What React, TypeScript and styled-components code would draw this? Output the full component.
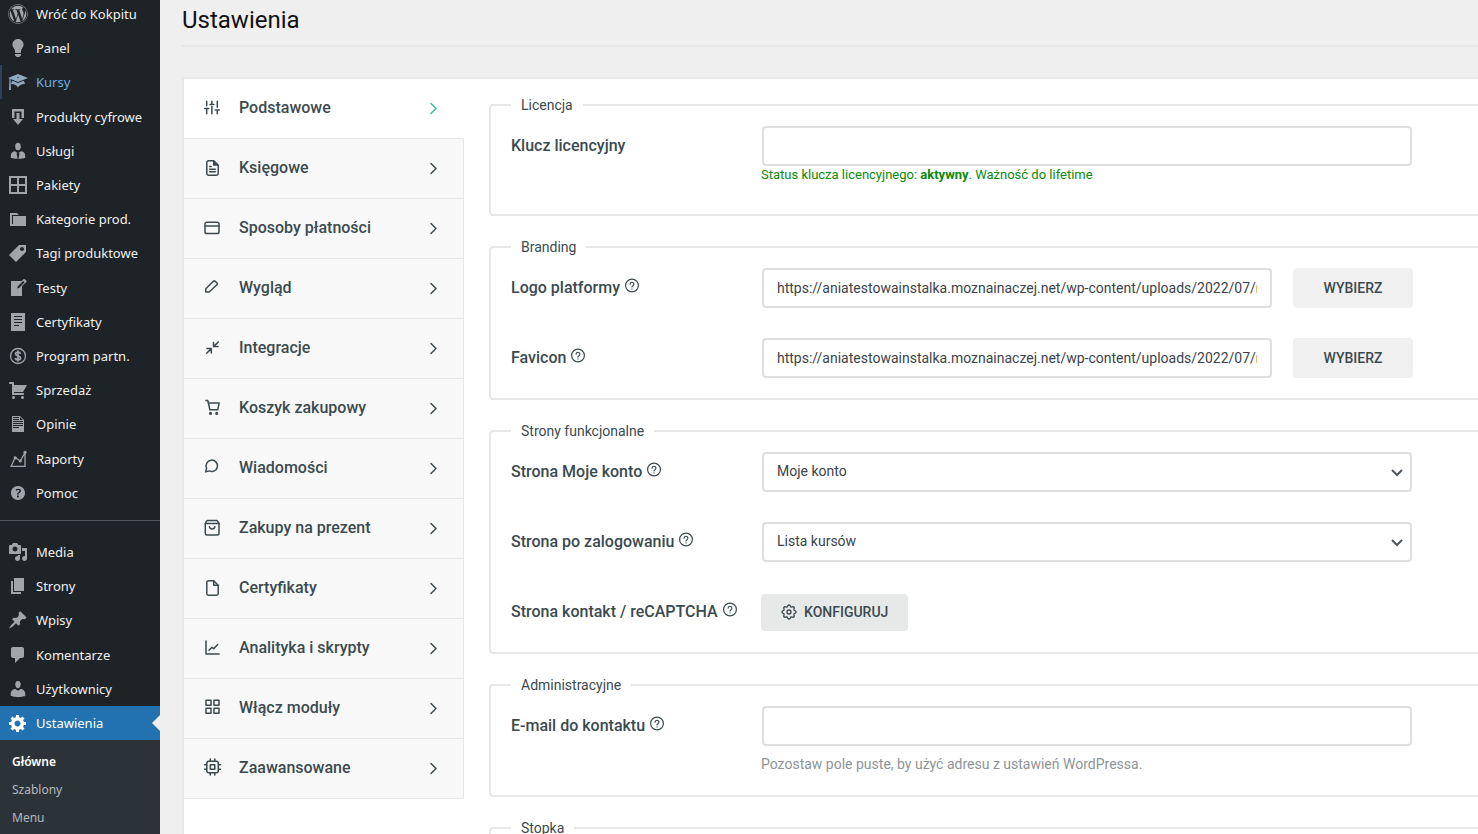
import React from 'react';
import styled, { createGlobalStyle, css } from 'styled-components';
import { FaWordpress } from 'react-icons/fa';

const color = {
  ink: '#3b4a4f',
  line: '#e6e8e8',
  page: '#efefef',
  side: '#1d2327',
  sub: '#2c3338',
  blue: '#2271b1',
};

const GlobalStyle = createGlobalStyle`
  *, *::before, *::after { box-sizing: border-box; }
  body {
    margin: 0;
    background: ${color.page};
    color: ${color.ink};
    font-family: Roboto, sans-serif;
    font-size: 14px;
    line-height: 20px;
  }
  a { color: inherit; text-decoration: none; }
  ul { list-style: none; margin: 0; padding: 0; }
`;

const Shell = styled.div`
  display: flex;
  height: 100vh;
  overflow: hidden;
`;

/* ---------- Admin sidebar ---------- */

const Sidebar = styled.nav`
  flex: 0 0 160px;
  margin-top: -3px;
  background: ${color.side};
  color: #f0f0f1;
  font-family: 'Noto Sans', sans-serif;
  font-size: 13px;
`;

const MenuGroup = styled.ul<{ $height: number }>`
  display: flex;
  flex-direction: column;
  justify-content: space-between;
  min-height: ${(p) => p.$height}px;
`;

const MenuLink = styled.a<{ $state?: 'hover' | 'current' }>`
  position: relative;
  display: flex;
  align-items: center;
  gap: 8px;
  height: 34px;
  padding: 0 8px;
  white-space: nowrap;

  svg {
    flex: none;
    width: 20px;
    height: 20px;
    fill: #a0a5aa;
    color: #a0a5aa;
  }

  ${(p) =>
    p.$state === 'hover' &&
    css`
      color: #72aee6;
      box-shadow: inset 2px 0 0 #2f4458;
      svg { fill: #90a8c0; }
    `}

  ${(p) =>
    p.$state === 'current' &&
    css`
      background: ${color.blue};
      color: #fff;
      svg { fill: #fff; }
      &::after {
        content: '';
        position: absolute;
        right: 0;
        top: 9px;
        border: 8px solid transparent;
        border-left-width: 0;
        border-right-color: ${color.page};
      }
    `}
`;

const MenuDivider = styled.hr`
  margin: 10px 0 14px;
  border: 0;
  border-top: 1px solid #50575e;
`;

const SubMenu = styled.ul`
  padding: 8px 0 20px;
  background: ${color.sub};
`;

const SubLink = styled.a<{ $current?: boolean }>`
  display: block;
  padding: 4px 12px;
  font-size: 12px;
  color: ${(p) => (p.$current ? '#fff' : '#b4b9be')};
  font-weight: ${(p) => (p.$current ? 600 : 400)};
`;

const Glyph = ({ d, children }: { d?: string; children?: React.ReactNode }) => (
  <svg viewBox="0 0 20 20" aria-hidden="true">
    {d && <path fillRule="evenodd" d={d} />}
    {children}
  </svg>
);

type MenuEntry = { label: string; icon: React.ReactNode; state?: 'hover' | 'current' };

const productMenu: MenuEntry[] = [
  { label: 'Wróć do Kokpitu', icon: <FaWordpress /> },
  {
    label: 'Panel',
    icon: (
      <Glyph d="M10 1c3.11 0 5.63 2.52 5.63 5.62 0 1.84-2.03 4.58-2.03 4.58-.33.44-.6 1.25-.6 1.8v1c0 .55-.45 1-1 1H8c-.55 0-1-.45-1-1v-1c0-.55-.27-1.36-.6-1.8 0 0-2.02-2.74-2.02-4.58C4.38 3.52 6.89 1 10 1zM7 16.87V16h6v.87c0 .62-.13 1.13-.75 1.13H12c0 .62-.4 1-1.02 1h-2c-.61 0-.98-.38-.98-1h-.25c-.62 0-.75-.51-.75-1.13z" />
    ),
  },
  {
    label: 'Kursy',
    state: 'hover',
    icon: (
      <Glyph d="M10 10L2.54 7.02 3 18H1l.48-11.41L0 6l10-4 10 4zm0-5c-.55 0-1 .22-1 .5s.45.5 1 .5 1-.22 1-.5-.45-.5-1-.5zm0 6l5.57-2.23c.71.94 1.2 2.07 1.36 3.3-.3-.04-.61-.07-.93-.07-2.55 0-4.78 1.37-6 3.41C8.78 13.37 6.55 12 4 12c-.32 0-.63.03-.93.07.16-1.23.65-2.36 1.36-3.3z" />
    ),
  },
  { label: 'Produkty cyfrowe', icon: <Glyph d="M4 2h12v9h-2.500V4.500h-7V11H4zM8.500 6h3v6H15l-5 6-5-6h3.500z" /> },
  {
    label: 'Usługi',
    icon: (
      <Glyph d="M10 9.200c-2.200 0-2.800-2.200-2.800-3.800C7.200 3.200 8.200 1.800 10 1.800s2.800 1.400 2.800 3.600c0 1.600-.6 3.800-2.800 3.800zM7 10.300l2.200 1.500L8.600 13l1 4.800c-3.500 0-6.800-.8-6.800-.8v-2.500c0-2.200 1.900-4.200 4.200-4.200zm6 0c2.300 0 4.200 2 4.200 4.200V17s-3.300.8-6.800.8l1-4.800-.6-1.200z" />
    ),
  },
  { label: 'Pakiety', icon: <Glyph d="M1 1h18v18H1zM3 3v6h6V3zm8 0v6h6V3zM3 11v6h6v-6zm8 0v6h6v-6z" /> },
  { label: 'Kategorie prod.', icon: <Glyph d="M5 7h13v10H2V4h7l2 2H4v9h1z" /> },
  {
    label: 'Tagi produktowe',
    icon: <Glyph d="M11 2h7v7L8 19l-7-7zm3 6c1.100 0 2-.9 2-2s-.9-2-2-2-2 .9-2 2 .9 2 2 2z" />,
  },
  {
    label: 'Testy',
    icon: (
      <Glyph d="M16.890 1.200l1.410 1.410c.39.39.39 1.020 0 1.410L14 8.330V18H3V3h10.670l1.800-1.800c.4-.39 1.030-.4 1.420 0zm-5.660 8.480l5.370-5.360-1.420-1.420-5.360 5.370-.71 2.120z" />
    ),
  },
  {
    label: 'Certyfikaty',
    icon: <Glyph d="M3 1h14v18H3zM6 4v1h8V4zm0 3v1h8V7zm0 3v1h8v-1zm0 3v1h5v-1z" />,
  },
  {
    label: 'Program partn.',
    icon: (
      <Glyph>
        <g fill="none" stroke="#a0a5aa">
          <circle cx="10" cy="10" r="7.500" strokeWidth="1.300" />
          <path
            strokeWidth="1.700"
            d="M12.500 7.800C12.300 6.800 11.300 6.200 10 6.200c-1.500 0-2.400.7-2.400 1.800 0 2.600 5 1.300 5 3.900 0 1.200-1.100 1.900-2.600 1.900-1.400 0-2.500-.7-2.700-1.800M10 4.500v11"
          />
        </g>
      </Glyph>
    ),
  },
  {
    label: 'Sprzedaż',
    icon: (
      <Glyph d="M6 13h9c.55 0 1 .45 1 1s-.45 1-1 1H5c-.55 0-1-.45-1-1V4H2c-.55 0-1-.45-1-1s.45-1 1-1h3c.55 0 1 .45 1 1v2h13l-4 7H6v1zm-.5 3c.83 0 1.500.67 1.500 1.500S6.330 19 5.500 19 4 18.330 4 17.500 4.670 16 5.500 16zm9 0c.83 0 1.500.67 1.500 1.500s-.67 1.500-1.500 1.500-1.500-.67-1.500-1.500.67-1.500 1.500-1.500z" />
    ),
  },
  {
    label: 'Opinie',
    icon: (
      <Glyph d="M12 2l4 4v12H4V2h8zM5 3v1h6V3H5zm7 3h3l-3-3v3zM5 5v1h6V5H5zm10 3V7H5v1h10zm0 2V9H5v1h10zm0 2v-1H5v1h10zm-4 2v-1H5v1h6z" />
    ),
  },
  {
    label: 'Raporty',
    icon: (
      <Glyph>
        <path fill="none" stroke="#a0a5aa" strokeWidth="1.300" d="M17 3.500L12.300 12 7.200 8.500 3.200 17.300H17z" />
        <circle cx="17" cy="3.300" r="1.600" />
        <circle cx="12.300" cy="12" r="1.500" />
        <circle cx="7.200" cy="8.800" r="1.600" />
      </Glyph>
    ),
  },
  {
    label: 'Pomoc',
    icon: (
      <Glyph d="M17 10c0-3.870-3.140-7-7-7-3.870 0-7 3.130-7 7s3.130 7 7 7c3.860 0 7-3.130 7-7zm-6.300 1.480H9.140v-.43c0-.38.08-.7.24-.98s.46-.57.88-.89c.41-.29.68-.53.81-.71.14-.18.2-.39.2-.62 0-.25-.09-.44-.28-.58-.19-.13-.45-.19-.79-.19-.58 0-1.250.19-2 .57l-.64-1.280c.87-.49 1.800-.74 2.770-.74.81 0 1.450.2 1.920.58.48.39.71.91.71 1.550 0 .43-.09.8-.29 1.110-.19.32-.57.67-1.110 1.060-.38.28-.61.49-.71.63-.1.15-.15.34-.15.57v.35zm-1.470 2.740c-.18-.17-.27-.42-.27-.73 0-.33.08-.58.26-.75s.43-.25.77-.25c.32 0 .57.09.75.26s.27.42.27.74c0 .3-.09.55-.27.72-.18.18-.43.27-.75.27-.33 0-.58-.09-.76-.26z" />
    ),
  },
];

const siteMenu: MenuEntry[] = [
  {
    label: 'Media',
    icon: (
      <Glyph d="M13 11V4c0-.55-.45-1-1-1h-1.670L9 1H5L3.670 3H2c-.55 0-1 .45-1 1v7c0 .55.45 1 1 1h10c.55 0 1-.45 1-1zM7 4.500c1.380 0 2.500 1.120 2.500 2.500S8.380 9.500 7 9.500 4.500 8.380 4.500 7 5.620 4.500 7 4.500zM14 6h5v10.500c0 1.380-1.120 2.500-2.500 2.500S14 17.880 14 16.500s1.120-2.500 2.500-2.500c.17 0 .34.02.5.05V9h-3V6zm-4 8.050V13h2v3.500c0 1.380-1.120 2.500-2.500 2.500S7 17.880 7 16.500 8.120 14 9.500 14c.17 0 .34.02.5.05z" />
    ),
  },
  { label: 'Strony', icon: <Glyph d="M6 15V2h10v13H6zm-1 1h8v2H3V5h2v11z" /> },
  {
    label: 'Wpisy',
    icon: (
      <Glyph d="M10.440 3.020l1.820-1.820 6.360 6.350-1.830 1.820c-1.050-.68-2.480-.57-3.410.36l-.75.75c-.92.93-1.040 2.350-.35 3.410l-1.830 1.820-2.410-2.410-2.800 2.790c-.42.42-3.380 2.710-3.800 2.290s1.860-3.390 2.280-3.810l2.790-2.790L4.100 9.360l1.830-1.820c1.050.69 2.480.57 3.400-.36l.75-.75c.93-.92 1.050-2.350.36-3.410z" />
    ),
  },
  {
    label: 'Komentarze',
    icon: <Glyph d="M5 2h9c1.100 0 2 .9 2 2v7c0 1.100-.9 2-2 2h-2l-5 5v-5H5c-1.100 0-2-.9-2-2V4c0-1.100.9-2 2-2z" />,
  },
  {
    label: 'Użytkownicy',
    icon: (
      <Glyph d="M10 9.250c-2.270 0-2.730-3.440-2.730-3.440C7 4.020 7.820 2 9.970 2c2.160 0 2.980 2.020 2.710 3.810 0 0-.41 3.440-2.680 3.440zm0 2.570L12.720 10c2.390 0 4.520 2.330 4.520 4.530v2.490s-3.650 1.130-7.240 1.130c-3.650 0-7.240-1.130-7.240-1.130v-2.490c0-2.250 1.940-4.480 4.470-4.480z" />
    ),
  },
  {
    label: 'Ustawienia',
    state: 'current',
    icon: (
      <Glyph d="M18 12h-2.180c-.17.7-.44 1.350-.81 1.930l1.540 1.540-2.100 2.100-1.540-1.540c-.58.36-1.230.63-1.910.79V19H8v-2.180c-.68-.16-1.330-.43-1.910-.79l-1.540 1.540-2.120-2.120 1.540-1.540c-.36-.58-.63-1.230-.79-1.910H1V9.030h2.170c.16-.7.44-1.350.8-1.940L2.430 5.550l2.100-2.100 1.540 1.540c.58-.37 1.240-.64 1.930-.81V2h3v2.180c.68.16 1.330.43 1.910.79l1.540-1.540 2.120 2.120-1.540 1.540c.36.59.64 1.240.8 1.940H18V12zm-8.500 1.500c1.660 0 3-1.340 3-3s-1.340-3-3-3-3 1.340-3 3 1.340 3 3 3z" />
    ),
  },
];

const Menu = ({ items, height }: { items: MenuEntry[]; height: number }) => (
  <MenuGroup $height={height}>
    {items.map((m) => (
      <li key={m.label}>
        <MenuLink href="#" $state={m.state} aria-current={m.state === 'current' ? 'page' : undefined}>
          {m.icon}
          <span>{m.label}</span>
        </MenuLink>
      </li>
    ))}
  </MenuGroup>
);

/* ---------- Main area ---------- */

const Main = styled.main`
  flex: 1;
  min-width: 0;
  padding-left: 22px;
`;

const PageTitle = styled.h1`
  margin: 0 0 30px;
  padding: 5px 0 10px;
  border-bottom: 2px solid ${color.line};
  color: #111;
  font-size: 24px;
  font-weight: 400;
  line-height: 30px;
`;

const Panel = styled.div`
  display: grid;
  grid-template-columns: 280px minmax(0, 1fr);
  column-gap: 25px;
  border: solid ${color.line};
  border-width: 2px 0 0 2px;
  background: #fff;
`;

const TabLink = styled.a<{ $active?: boolean }>`
  display: flex;
  align-items: center;
  gap: 17px;
  height: 60px;
  padding: 0 22px 2px 18px;
  border: solid ${color.line};
  border-width: 0 1px 1px 0;
  ${(p) => p.$active && 'border-right-color: transparent;'}
  background: ${(p) => (p.$active ? '#fff' : '#f8f8f8')};
  font-size: 16px;
  font-weight: 500;

  span { flex: 1; }
`;

const LineIcon = styled.svg<{ $size?: number }>`
  flex: none;
  width: ${(p) => p.$size ?? 20}px;
  height: ${(p) => p.$size ?? 20}px;
  fill: none;
  stroke: currentColor;
  stroke-width: 1.5;
  stroke-linecap: round;
  stroke-linejoin: round;
`;

const Chevron = styled(LineIcon)<{ $active?: boolean }>`
  width: 16px;
  height: 16px;
  color: ${(p) => (p.$active ? '#35bd9e' : color.ink)};
`;

const tabs: { label: string; icon: React.ReactNode }[] = [
  {
    label: 'Podstawowe',
    icon: <path d="M4.700 3.200v4.500M4.700 10.500v5.300M2.700 10.500h4M9.900 3.200v2.500M9.900 8.500v7.300M7.900 6.400h4M15.300 3.200v6M15.300 12v3.800M13.300 12h4" />,
  },
  {
    label: 'Księgowe',
    icon: (
      <>
        <path d="M11.700 2.700H6.500A1.700 1.700 0 0 0 4.800 4.400v11.200a1.700 1.700 0 0 0 1.700 1.700h8a1.700 1.700 0 0 0 1.700-1.700V7.200z" />
        <path fill="currentColor" d="M11.700 3v4h4.200z" />
        <path d="M7.700 8.500h1.500M7.700 11.200h5.600M7.700 13.800h5.600" />
      </>
    ),
  },
  {
    label: 'Sposoby płatności',
    icon: (
      <>
        <rect x="3" y="4.300" width="14" height="11.200" rx="1.800" />
        <path d="M3 8h14" />
      </>
    ),
  },
  {
    label: 'Wygląd',
    icon: <path d="M3.800 14v-3.200l7.500-7.600a1.300 1.300 0 0 1 1.900 0l1.700 1.700a1.300 1.300 0 0 1 0 1.900L7.200 14z" />,
  },
  {
    label: 'Integracje',
    icon: <path d="M16.300 4l-4.800 4.600M11.500 4.400v4.200h4.500M4.700 15.200l4.600-4.600M5 10.600h4.300v4.500" />,
  },
  {
    label: 'Koszyk zakupowy',
    icon: (
      <>
        <path d="M4 2.500h1.800l2.100 9.300h7.800l1.500-6.900H6.400" />
        <circle cx="8.500" cy="15.400" r=".8" />
        <circle cx="14.700" cy="15.400" r=".8" />
      </>
    ),
  },
  {
    label: 'Wiadomości',
    icon: <path d="M4.600 10.200A5.700 5.700 0 1 1 7.200 12.900L3.700 13.900z" />,
  },
  {
    label: 'Zakupy na prezent',
    icon: (
      <>
        <path d="M3.300 5.500l1.300-2.300a1.500 1.500 0 0 1 1.200-.7h8.600a1.500 1.500 0 0 1 1.200.7L17 5.500v9.900a1.700 1.700 0 0 1-1.700 1.700H5A1.700 1.700 0 0 1 3.300 15.400z" />
        <path d="M3.300 5.500H17M7.400 8.700a2.800 2.800 0 0 0 5.500 0" />
      </>
    ),
  },
  {
    label: 'Certyfikaty',
    icon: (
      <>
        <path d="M11.700 2.700H6.500A1.700 1.700 0 0 0 4.800 4.400v11.200a1.700 1.700 0 0 0 1.700 1.700h8a1.700 1.700 0 0 0 1.700-1.700V7.200z" />
        <path d="M11.700 2.900v4.300h4.300" />
      </>
    ),
  },
  {
    label: 'Analityka i skrypty',
    icon: <path d="M4 3v13.100h13.200M7 12.300l2.700-2.900 2 1.300 4-4.200" />,
  },
  {
    label: 'Włącz moduły',
    icon: <path d="M4 2.300h5v5H4zM12 2.300h5v5h-5zM4 10.300h5v5H4zM12 10.300h5v5h-5z" />,
  },
  {
    label: 'Zaawansowane',
    icon: (
      <>
        <rect x="4.800" y="3.200" width="11.500" height="11.500" rx="2" />
        <rect x="8.300" y="6.700" width="4.500" height="4.500" />
        <path d="M8.300 2.900V1M12.800 2.900V1M8.300 14.900v2M12.800 14.900v2M4.500 6.700H2.600M4.500 11.200H2.600M16.600 6.700h1.900M16.600 11.200h1.900" />
      </>
    ),
  },
];

const Form = styled.form`
  display: flex;
  flex-direction: column;
  gap: 21px;
  padding-top: 16px;
`;

const Group = styled.fieldset`
  display: flex;
  flex-direction: column;
  gap: 30px;
  min-width: 0;
  margin: 0;
  padding: 11px 20px 20px;
  border: solid ${color.line};
  border-width: 2px 0 2px 2px;
  border-radius: 4px 0 0 4px;
`;

const Legend = styled.legend`
  padding: 0 10px;
`;

const Row = styled.div`
  display: grid;
  grid-template-columns: 250px minmax(0, 652px);
  min-height: 40px;
`;

const LabelCell = styled.div`
  display: flex;
  align-items: flex-start;
  gap: 4px;
  padding-top: 10px;
  white-space: nowrap;
  font-size: 16px;
  font-weight: 500;
`;

const HelpButton = styled.button`
  display: flex;
  padding: 0;
  border: 0;
  background: none;
  color: inherit;
`;

const Control = styled.div`
  display: flex;
  align-items: center;
  gap: 20px;
  height: 40px;
`;

const fieldBox = css`
  flex: 1;
  min-width: 0;
  height: 40px;
  margin: 0 1px;
  border: 2px solid #dedfdf;
  border-radius: 4px;
  background: #fff;
  color: #3c434a;
  font-family: inherit;
  font-size: 14px;
`;

const TextInput = styled.input`
  ${fieldBox}
  padding: 0 13px;
`;

const SelectWrap = styled.div`
  position: relative;
  display: flex;
  flex: 1;
`;

const Select = styled.select`
  ${fieldBox}
  padding: 0 32px 2px 13px;
  appearance: none;
`;

const SelectArrow = styled(LineIcon)`
  position: absolute;
  right: 8px;
  top: 12px;
  color: #50575e;
  stroke-width: 2;
  stroke-linecap: butt;
  stroke-linejoin: miter;
  pointer-events: none;
`;

const PickButton = styled.button`
  width: 120px;
  height: 40px;
  border: 0;
  border-radius: 4px;
  background: #f0f0f0;
  color: ${color.ink};
  font: 500 14px/20px Roboto, sans-serif;
  text-transform: uppercase;
`;

const ConfigButton = styled(PickButton)`
  display: flex;
  align-items: center;
  gap: 7px;
  width: auto;
  height: 37px;
  padding: 0 20px;
  background: #e7e9e9;
`;

const Status = styled.p`
  margin: 0 0 10px;
  color: #0a8a0a;
  font-size: 13px;
  line-height: 18px;
`;

const Hint = styled.p`
  margin: 8px 0 1px;
  color: #8e9496;
`;

type FieldProps = {
  id: string;
  label: string;
  help?: boolean;
  children: React.ReactNode;
  note?: React.ReactNode;
};

const Field = ({ id, label, help, children, note }: FieldProps) => (
  <Row>
    <LabelCell>
      <label htmlFor={id}>{label}</label>
      {help && (
        <HelpButton type="button" aria-label={`Pomoc: ${label}`}>
          <LineIcon viewBox="0 0 16 16" $size={16}>
            <g strokeWidth="1.200">
              <circle cx="8" cy="7.500" r="6.400" />
              <path d="M6.100 6.200a1.900 1.900 0 1 1 2.900 1.600c-.6.400-1 .7-1 1.100M8 10.800v.1" />
            </g>
          </LineIcon>
        </HelpButton>
      )}
    </LabelCell>
    <div>
      <Control>{children}</Control>
      {note}
    </div>
  </Row>
);

const SelectField = ({ id, value }: { id: string; value: string }) => (
  <SelectWrap>
    <Select id={id} defaultValue={value}>
      <option>{value}</option>
    </Select>
    <SelectArrow viewBox="0 0 16 16" $size={16} aria-hidden="true">
      <path d="M3 6l5 5 5-5" />
    </SelectArrow>
  </SelectWrap>
);

/* Outline of a cog with eight rounded teeth */
const cogOutline =
  Array.from({ length: 96 }, (_, i) => {
    const angle = (i / 96) * Math.PI * 2;
    const radius = 9.3 + 1.2 * Math.cos(angle * 8);
    const x = (12 + radius * Math.cos(angle)).toFixed(2);
    const y = (12 + radius * Math.sin(angle)).toFixed(2);
    return `${i ? 'L' : 'M'}${x} ${y}`;
  }).join('') + 'Z';

const uploads = 'https://aniatestowainstalka.moznainaczej.net/wp-content/uploads/2022/07/';

export default function App() {
  return (
    <>
      <GlobalStyle />
      <Shell>
        <Sidebar aria-label="Menu główne">
          <Menu items={productMenu} height={513} />
          <MenuDivider />
          <Menu items={siteMenu} height={205} />
          <SubMenu>
            {['Główne', 'Szablony', 'Menu'].map((label, i) => (
              <li key={label}>
                <SubLink href="#" $current={i === 0}>{label}</SubLink>
              </li>
            ))}
          </SubMenu>
        </Sidebar>

        <Main>
          <PageTitle>Ustawienia</PageTitle>
          <Panel>
            <nav aria-label="Ustawienia">
              {tabs.map((t, i) => (
                <TabLink key={t.label} href="#" $active={i === 0}>
                  <LineIcon viewBox="0 0 20 20" aria-hidden="true">{t.icon}</LineIcon>
                  <span>{t.label}</span>
                  <Chevron viewBox="0 0 16 16" $active={i === 0} aria-hidden="true">
                    <path d="M6 3.500l5 5-5 5" />
                  </Chevron>
                </TabLink>
              ))}
            </nav>

            <Form>
              <Group>
                <Legend>Licencja</Legend>
                <Field
                  id="license"
                  label="Klucz licencyjny"
                  note={
                    <Status>
                      Status klucza licencyjnego: <b>aktywny</b>. Ważność do lifetime
                    </Status>
                  }
                >
                  <TextInput id="license" type="text" />
                </Field>
              </Group>

              <Group>
                <Legend>Branding</Legend>
                <Field id="logo" label="Logo platformy" help>
                  <TextInput id="logo" type="text" defaultValue={`${uploads}moznainaczej.png`} />
                  <PickButton type="button">Wybierz</PickButton>
                </Field>
                <Field id="favicon" label="Favicon" help>
                  <TextInput id="favicon" type="text" defaultValue={`${uploads}moznainaczej.png`} />
                  <PickButton type="button">Wybierz</PickButton>
                </Field>
              </Group>

              <Group>
                <Legend>Strony funkcjonalne</Legend>
                <Field id="account" label="Strona Moje konto" help>
                  <SelectField id="account" value="Moje konto" />
                </Field>
                <Field id="after-login" label="Strona po zalogowaniu" help>
                  <SelectField id="after-login" value="Lista kursów" />
                </Field>
                <Field id="contact" label="Strona kontakt / reCAPTCHA" help>
                  <ConfigButton id="contact" type="button">
                    <LineIcon viewBox="0 0 24 24" $size={16} aria-hidden="true">
                      <g strokeWidth="2">
                        <circle cx="12" cy="12" r="3" />
                        <path d={cogOutline} />
                      </g>
                    </LineIcon>
                    Konfiguruj
                  </ConfigButton>
                </Field>
              </Group>

              <Group>
                <Legend>Administracyjne</Legend>
                <Field
                  id="email"
                  label="E-mail do kontaktu"
                  help
                  note={<Hint>Pozostaw pole puste, by użyć adresu z ustawień WordPressa.</Hint>}
                >
                  <TextInput id="email" type="email" />
                </Field>
              </Group>

              <Group>
                <Legend>Stopka</Legend>
              </Group>
            </Form>
          </Panel>
        </Main>
      </Shell>
    </>
  );
}
